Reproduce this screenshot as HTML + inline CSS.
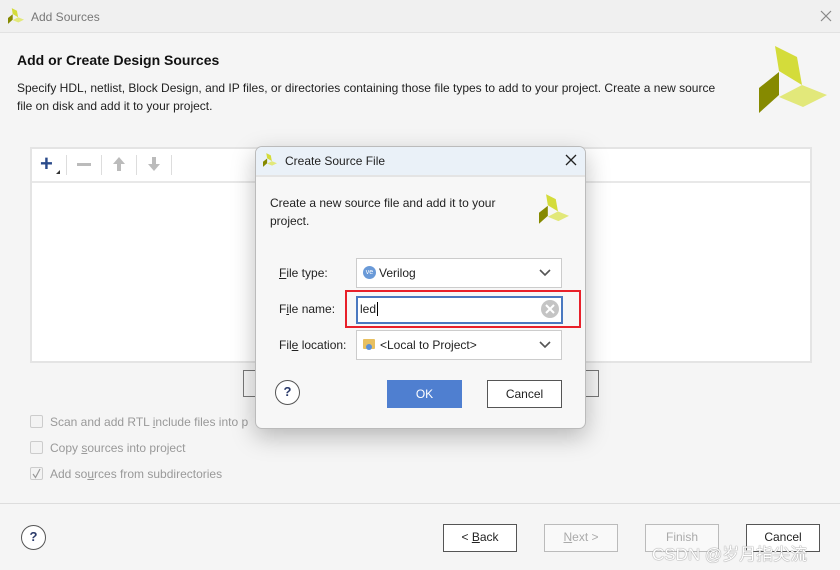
<!DOCTYPE html>
<html><head><style>
*{box-sizing:border-box;margin:0;padding:0}
body{width:840px;height:570px;overflow:hidden;background:#f5f5f5;font-family:"Liberation Sans",sans-serif;font-size:12px;color:#222;position:relative}
.a{position:absolute}
.btn{position:absolute;border:1px solid #555;background:#fff;text-align:center;font-size:12px;line-height:25px}
.dis{border-color:#bbb;color:#aaa;background:#f9f9f9}
.cb{position:absolute;width:13px;height:13px;border:1px solid #ccc;border-radius:2px;background:#f3f3f3}
.lbl{position:absolute;color:#999;font-size:12px}
.help{position:absolute;width:25px;height:25px;border:1.5px solid #555;border-radius:50%;text-align:center;line-height:22px;font-weight:bold;color:#2a3a6a;font-size:13px;background:#fff}
</style></head><body>
<div class="a" style="left:0;top:0;width:840px;height:33px;background:#f0f0f0;border-bottom:1px solid #e2e2e2"></div>
<svg class="a" style="left:8px;top:8px" width="16" height="16" viewBox="0 0 68 67"><polygon points="16,0 38,11 43,39 20,25" fill="#d4dc3a"/><polygon points="20,26 20,49 0,67 0,42" fill="#868a00"/><polygon points="20,51 43,39 68,49 44,61" fill="#e2e87a"/></svg>
<div class="a" style="left:31px;top:10px;color:#777;font-size:12px">Add Sources</div>
<svg class="a" style="left:820px;top:10px" width="12" height="12"><path d="M1 1L11 11M11 1L1 11" stroke="#888" stroke-width="1.2"/></svg>
<div class="a" style="left:17px;top:52px;font-weight:bold;font-size:14px;color:#111">Add or Create Design Sources</div>
<div class="a" style="left:17px;top:79px;width:714px;line-height:18px;color:#222">Specify HDL, netlist, Block Design, and IP files, or directories containing those file types to add to your project. Create a new source file on disk and add it to your project.</div>
<svg class="a" style="left:759px;top:46px" width="68" height="67" viewBox="0 0 68 67"><polygon points="16,0 38,11 43,39 20,25" fill="#d4dc3a"/><polygon points="20,26 20,49 0,67 0,42" fill="#868a00"/><polygon points="20,51 43,39 68,49 44,61" fill="#e2e87a"/></svg>
<div class="a" style="left:30px;top:147px;width:782px;height:216px;background:#fff;border:2px solid #e4e4e4"></div>
<div class="a" style="left:32px;top:181px;width:778px;height:2px;background:#e8e8e8"></div>
<div class="a" style="left:40px;top:151px;font-size:22px;font-weight:bold;color:#2a4a8a">+</div>
<div class="a" style="left:56px;top:170px;width:0;height:0;border-left:4px solid transparent;border-bottom:4px solid #333"></div>
<div class="a" style="left:77px;top:163px;width:14px;height:3px;background:#bbb"></div>
<svg class="a" style="left:112px;top:156px" width="14" height="16"><path d="M7 1L13 8H9V15H5V8H1Z" fill="#bbb"/></svg>
<svg class="a" style="left:147px;top:156px" width="14" height="16"><path d="M7 15L13 8H9V1H5V8H1Z" fill="#bbb"/></svg>
<div class="a" style="left:66px;top:155px;width:1px;height:20px;background:#ddd"></div>
<div class="a" style="left:101px;top:155px;width:1px;height:20px;background:#ddd"></div>
<div class="a" style="left:136px;top:155px;width:1px;height:20px;background:#ddd"></div>
<div class="a" style="left:171px;top:155px;width:1px;height:20px;background:#ddd"></div>
<div class="a" style="left:243px;top:370px;width:356px;height:27px;border:1px solid #777;background:#f5f5f5"></div>
<div class="cb" style="left:30px;top:415px"></div><div class="lbl" style="left:50px;top:415px">Scan and add RTL <u>i</u>nclude files into p</div>
<div class="cb" style="left:30px;top:441px"></div><div class="lbl" style="left:50px;top:441px">Copy <u>s</u>ources into project</div>
<div class="cb" style="left:30px;top:467px"></div><svg class="a" style="left:32px;top:468px" width="10" height="11"><path d="M1 6L3.5 9.5L8 1" stroke="#999" stroke-width="1.2" fill="none"/></svg><div class="lbl" style="left:50px;top:467px">Add so<u>u</u>rces from subdirectories</div>
<div class="a" style="left:0;top:503px;width:840px;height:1px;background:#ddd"></div>
<div class="help" style="left:21px;top:525px">?</div>
<div class="btn" style="left:443px;top:524px;width:74px;height:28px">&lt; <u>B</u>ack</div>
<div class="btn dis" style="left:544px;top:524px;width:74px;height:28px"><u>N</u>ext &gt;</div>
<div class="btn dis" style="left:645px;top:524px;width:74px;height:28px">Finish</div>
<div class="btn" style="left:746px;top:524px;width:74px;height:28px">Cancel</div>
<div class="a" style="left:652px;top:540px;color:#fff;font-size:17px;font-family:'Liberation Sans','Noto Sans CJK SC',sans-serif;text-shadow:0 0 1px #888,0 0 1px #888">CSDN @岁月指尖流</div>
<div class="a" style="left:255px;top:146px;width:331px;height:283px;background:#f7f7f7;border:1px solid #bbb;border-radius:7px;box-shadow:0 8px 24px rgba(0,0,0,.25);overflow:hidden">
<div style="height:30px;background:#eaf1f8;border-bottom:2px solid #e4e4e4"></div>
</div>
<svg class="a" style="left:263px;top:153px" width="14" height="14" viewBox="0 0 68 67"><polygon points="16,0 38,11 43,39 20,25" fill="#d4dc3a"/><polygon points="20,26 20,49 0,67 0,42" fill="#868a00"/><polygon points="20,51 43,39 68,49 44,61" fill="#e2e87a"/></svg>
<div class="a" style="left:285px;top:154px;font-size:12px">Create Source File</div>
<svg class="a" style="left:565px;top:154px" width="12" height="12"><path d="M1 1L11 11M11 1L1 11" stroke="#222" stroke-width="1.3"/></svg>
<div class="a" style="left:270px;top:194px;width:250px;line-height:18px">Create a new source file and add it to your project.</div>
<svg class="a" style="left:539px;top:194px" width="30" height="30" viewBox="0 0 68 67"><polygon points="16,0 38,11 43,39 20,25" fill="#d4dc3a"/><polygon points="20,26 20,49 0,67 0,42" fill="#868a00"/><polygon points="20,51 43,39 68,49 44,61" fill="#e2e87a"/></svg>
<div class="a" style="left:279px;top:266px"><u>F</u>ile type:</div>
<div class="a" style="left:279px;top:302px">F<u>i</u>le name:</div>
<div class="a" style="left:279px;top:338px">Fil<u>e</u> location:</div>
<div class="a" style="left:356px;top:258px;width:206px;height:30px;background:#fff;border:1px solid #ccc"></div>
<div class="a" style="left:363px;top:266px;width:13px;height:13px;border-radius:50%;background:#6a9ad8;color:#fff;font-size:7px;line-height:13px;text-align:center">ve</div>
<div class="a" style="left:379px;top:266px">Verilog</div>
<svg class="a" style="left:539px;top:269px" width="12" height="8"><path d="M1 1L6 6L11 1" stroke="#555" stroke-width="1.6" fill="none"/></svg>
<div class="a" style="left:345px;top:290px;width:236px;height:38px;border:2px solid #e8202a"></div>
<div class="a" style="left:356px;top:296px;width:207px;height:28px;background:#fff;border:2px solid #4a78c0"></div>
<div class="a" style="left:360px;top:302px">led<span style="border-left:1px solid #000;margin-left:1px"></span></div>
<div class="a" style="left:541px;top:300px;width:18px;height:18px;border-radius:50%;background:#c4c4c4"></div>
<svg class="a" style="left:545px;top:304px" width="10" height="10"><path d="M1 1L9 9M9 1L1 9" stroke="#fff" stroke-width="2"/></svg>
<div class="a" style="left:356px;top:330px;width:206px;height:30px;background:#fff;border:1px solid #ccc"></div>
<div class="a" style="left:363px;top:339px;width:12px;height:10px;background:#e8c060;border-radius:1px"></div>
<div class="a" style="left:366px;top:344px;width:6px;height:6px;border-radius:50%;background:#5a90d8"></div>
<div class="a" style="left:380px;top:338px">&lt;Local to Project&gt;</div>
<svg class="a" style="left:539px;top:341px" width="12" height="8"><path d="M1 1L6 6L11 1" stroke="#555" stroke-width="1.6" fill="none"/></svg>
<div class="help" style="left:275px;top:380px">?</div>
<div class="a" style="left:387px;top:380px;width:75px;height:28px;background:#4f7fd0;color:#fff;text-align:center;line-height:28px">OK</div>
<div class="btn" style="left:487px;top:380px;width:75px;height:28px;line-height:26px">Cancel</div>
</body></html>
